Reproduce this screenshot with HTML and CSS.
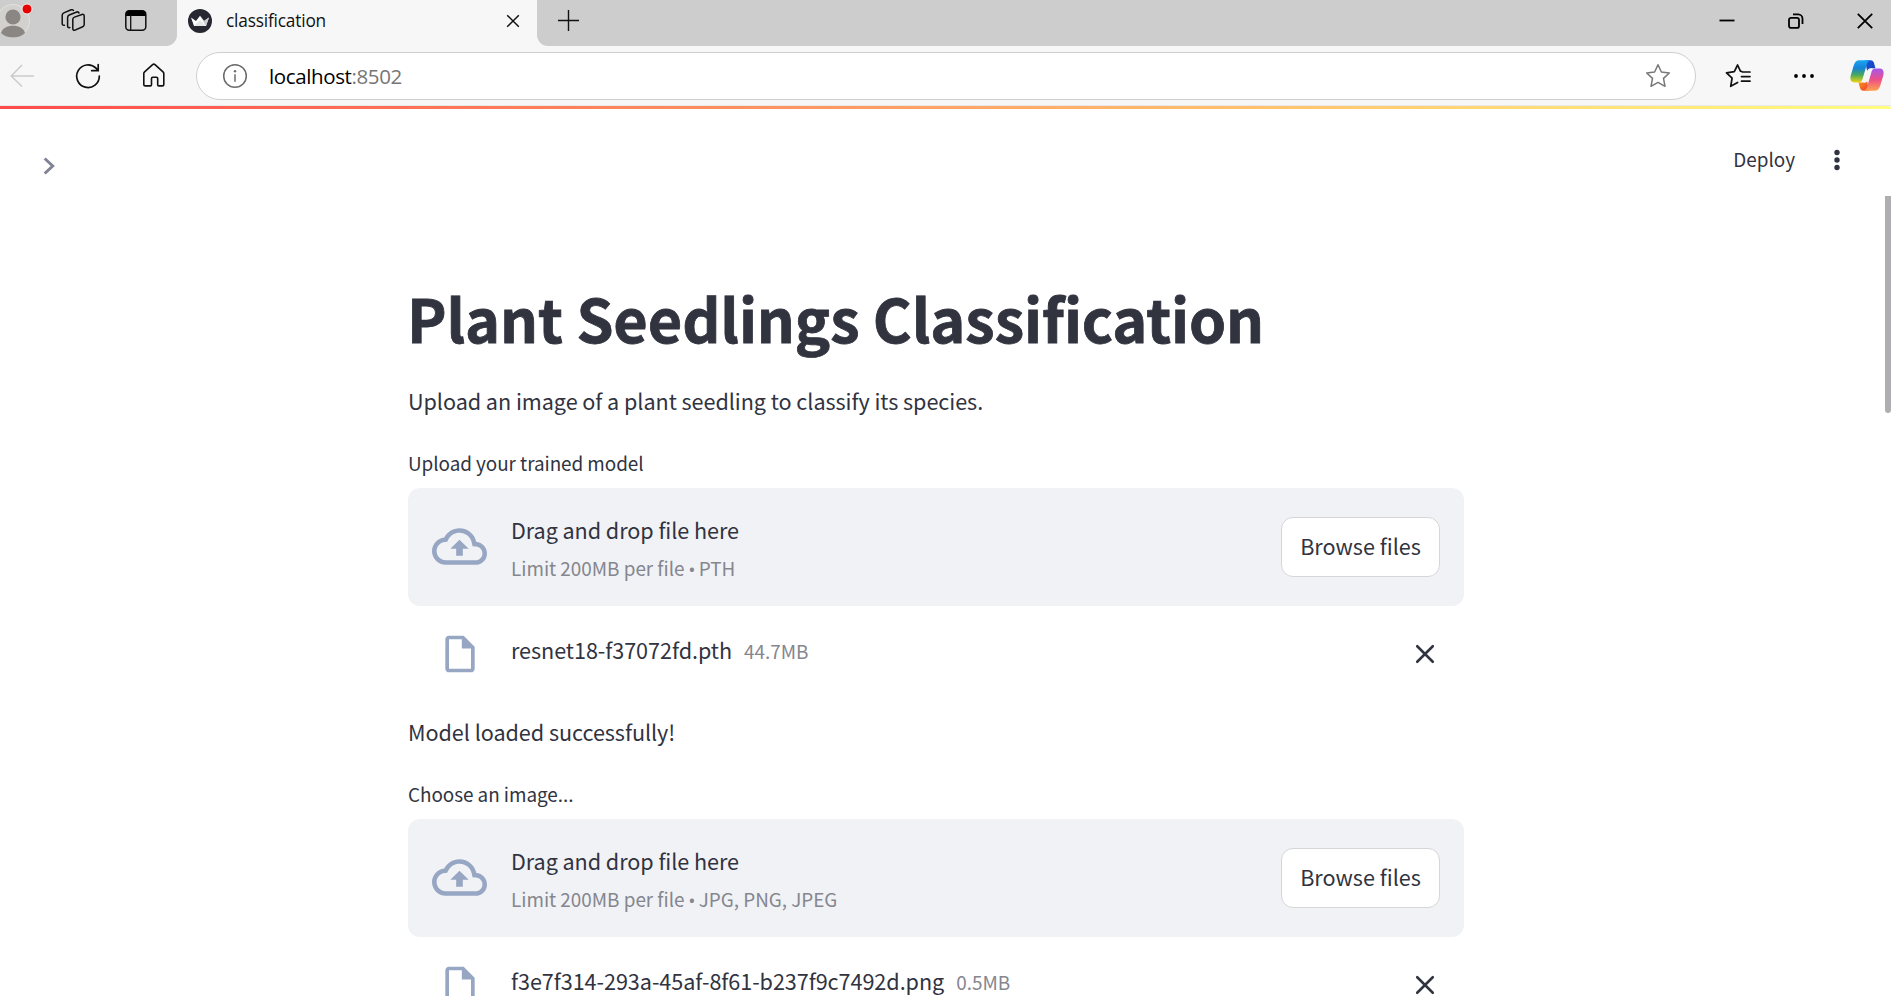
FILE: index.html
```html
<!DOCTYPE html>
<html lang="en">
<head>
<meta charset="utf-8">
<title>classification</title>
<link rel="stylesheet" href="styles.css">
</head>
<body>
<svg class="defs" width="0" height="0">
  <symbol id="cloud" viewBox="0 0 24 24"><path d="M19.35 10.04C18.67 6.59 15.64 4 12 4 9.11 4 6.6 5.64 5.35 8.04 2.34 8.36 0 10.91 0 14c0 3.31 2.69 6 6 6h13c2.76 0 5-2.24 5-5 0-2.64-2.05-4.78-4.65-4.96zM19 18H6c-2.21 0-4-1.79-4-4 0-2.05 1.53-3.76 3.56-3.97l1.07-.11.5-.95C8.08 7.14 9.94 6 12 6c2.62 0 4.88 1.86 5.39 4.43l.3 1.5 1.53.11c1.56.1 2.78 1.41 2.78 2.96 0 1.65-1.35 3-3 3zM8 13h2.55v3h2.9v-3H16l-4-4z"/></symbol>
  <symbol id="file" viewBox="0 0 24 24"><path d="M14 2H6c-1.1 0-1.99.9-1.99 2L4 20c0 1.1.89 2 1.99 2H18c1.1 0 2-.9 2-2V8l-6-6zM6 20V4h7v5h5v11H6z"/></symbol>
  <symbol id="cross" viewBox="0 0 18 18"><path d="M2 2l14 14M16 2L2 16" fill="none" stroke="#31333f" stroke-width="2.300" stroke-linecap="round"/></symbol>
</svg>

<div class="tabbar">
  <div class="tab-tools">
    <svg class="avatar" width="34" height="46" viewBox="0 0 34 46">
      <circle cx="13" cy="21" r="16.500" fill="#d3d1ce" stroke="#e3e2e0"/>
      <circle cx="13" cy="17" r="7.600" fill="#8a8683"/>
      <path d="M1 33c1-4.600 6-7.300 12-7.300s11 2.700 12 7.300c-3 3-7.500 4.500-12 4.500S4 36 1 33z" fill="#8a8683"/>
      <circle cx="27" cy="9" r="5" fill="#e60000" stroke="#f3eeee" stroke-width="1"/>
    </svg>
    <svg class="workspaces" width="26" height="26" viewBox="0 0 26 26" fill="none" stroke="#111" stroke-width="1.500" stroke-linejoin="round" stroke-linecap="round">
      <path d="M12.800 11.200q.2-1.600 1.700-2.100l7.500-2.600q2.200-.6 2.200 1.600v8.400q0 1.600-1.500 2.200l-7.700 3.400q-2.200.8-2.200-1.500z"/>
      <path d="M9.800 19.600q-2.200.5-2.200-1.700V9.400q0-1.700 1.600-2.400l7.600-3q1.700-.5 2.200 1"/>
      <path d="M4.400 17.300q-2.200.3-2.200-1.700V7.300q0-1.700 1.600-2.400l7.400-3.100q1.500-.5 2.200.6"/>
    </svg>
    <svg class="panel" width="22" height="22" viewBox="0 0 22 22">
      <rect x=".8" y=".8" width="20" height="19.500" rx="3.500" fill="none" stroke="#111" stroke-width="1.500"/>
      <path d="M.8 6V4a3.500 3.500 0 0 1 3.500-3.500h13A3.500 3.500 0 0 1 20.800 4v2z" fill="#000"/>
      <path d="M5.700 5v15" stroke="#111" stroke-width="1.300"/>
    </svg>
  </div>
  <div class="tab">
    <svg class="favicon" width="24" height="24" viewBox="0 0 24 24">
      <circle cx="12" cy="12" r="12" fill="#262730"/>
      <path d="M3 8.500l5 3.500 4-5.200 4 5.200 5-3.500-3 8.400H6z" fill="#fff"/>
      <path d="M12 6.800l4 5.200 5-3.500-3 8.400z" fill="#c9c9cc"/>
      <path d="M6 16.900L12 11l6 5.900z" fill="#e6e6e8"/>
    </svg>
    <span class="tab-title">classification</span>
    <svg class="tab-close" width="14" height="14" viewBox="0 0 14 14"><path d="M1.200 1.200l11.600 11.600M12.800 1.200L1.200 12.800" stroke="#111" stroke-width="1.500"/></svg>
  </div>
  <div class="tab-rest">
    <svg class="plus" width="21" height="21" viewBox="0 0 21 21"><path d="M10.500 0v21M0 10.500h21" stroke="#111" stroke-width="1.400"/></svg>
    <div class="window-buttons">
      <svg width="16" height="16" viewBox="0 0 16 16"><path d="M.5 7.500h15" stroke="#000" stroke-width="1.800"/></svg>
      <svg width="16" height="16" viewBox="0 0 16 16" fill="none" stroke="#000" stroke-width="1.800"><rect x="1" y="4.900" width="10" height="10" rx="2"/><path d="M5 1.400h5.200a4.300 4.300 0 0 1 4.300 4.300V11"/></svg>
      <svg width="16" height="16" viewBox="0 0 16 16"><path d="M.8.8l14.400 14.400M15.200.8L.8 15.200" stroke="#000" stroke-width="1.800"/></svg>
    </div>
  </div>
</div>

<div class="toolbar">
  <svg class="back" width="25" height="24" viewBox="0 0 25 24" fill="none" stroke="#cbcbcb" stroke-width="1.500"><path d="M24 12H1.500M12 1L1.200 12 12 22.500"/></svg>
  <svg class="reload" width="26" height="26" viewBox="0 0 26 26" fill="none" stroke="#111" stroke-width="1.700" stroke-linecap="round"><path d="M24.300 13A11.300 11.300 0 1 1 21 5.200l2 2.300M23.200 1.500v6.200h-6.500"/></svg>
  <svg class="home" width="24" height="25" viewBox="0 0 24 25" fill="none" stroke="#111" stroke-width="1.600" stroke-linejoin="round"><path d="M1.800 10.500q0-1 .8-1.700l8-7.200q1.200-1 2.400 0l8 7.200q.8.700.8 1.700v10.700q0 1.700-1.700 1.700h-3.300q-1.100 0-1.100-1.100v-6.300q0-1.200-1.200-1.200h-3.800q-1.200 0-1.200 1.200v6.300q0 1.100-1.100 1.100H3.500q-1.700 0-1.700-1.700z"/></svg>
  <div class="address">
    <svg class="info" width="26" height="26" viewBox="0 0 26 26"><circle cx="13" cy="13" r="11.300" fill="none" stroke="#6b6b6b" stroke-width="1.500"/><path d="M13 11.300v7.500" stroke="#6b6b6b" stroke-width="1.500"/><circle cx="13" cy="8.200" r="1.200" fill="#6b6b6b"/></svg>
    <span class="url">localhost<span class="port">:8502</span></span>
    <svg class="star" width="26" height="26" viewBox="0 0 26 26" fill="none" stroke="#777" stroke-width="1.500" stroke-linejoin="round"><path d="M13 1.800l3.400 7.200 7.900 1-5.800 5.400 1.500 7.900-7-3.900-7 3.900 1.500-7.900L1.700 10l7.900-1z"/></svg>
  </div>
  <svg class="favorites" width="26" height="26" viewBox="0 0 26 26" fill="none" stroke="#111" stroke-width="1.700" stroke-linejoin="round" stroke-linecap="round"><path d="M16.800 8.500l-1.400-.3L12.600 2 9.300 8.600 1.500 9.800l5.600 5.400-1.400 8.100 6.900-3.800"/><path d="M17.500 9H25M16.500 13.600H25M16.500 18.200H25"/></svg>
  <svg class="more" width="22" height="6" viewBox="0 0 22 6" fill="#000"><circle cx="3" cy="3" r="1.900"/><circle cx="11" cy="3" r="1.900"/><circle cx="19" cy="3" r="1.900"/></svg>
  <svg class="copilot" width="34" height="31" viewBox="0 0 34 31">
    <defs>
      <linearGradient id="cpA" x1="0" y1="0" x2="0" y2="1"><stop offset="0" stop-color="#1aa6f0"/><stop offset=".35" stop-color="#1683d8"/><stop offset=".65" stop-color="#45a85e"/><stop offset="1" stop-color="#f2d312"/></linearGradient>
      <linearGradient id="cpB" x1="0" y1="0" x2="0" y2="1"><stop offset="0" stop-color="#a457ef"/><stop offset=".5" stop-color="#ee4f87"/><stop offset="1" stop-color="#ffa24e"/></linearGradient>
      <linearGradient id="cpC" x1="0" y1="0" x2="1" y2="1"><stop offset="0" stop-color="#1857e0"/><stop offset="1" stop-color="#1540b8"/></linearGradient>
      <linearGradient id="cpD" x1="0" y1="0" x2="1" y2="1"><stop offset="0" stop-color="#f9a11d"/><stop offset="1" stop-color="#ec3a2e"/></linearGradient>
    </defs>
    <path d="M15 .3h5.500c2 0 3 1.200 3.600 3l1.300 5H21c-2.200 0-3.200.8-3.900 2.800z" fill="url(#cpC)"/>
    <path d="M19 30.700h-5.500c-2 0-3-1.200-3.600-3l-1.400-5.200H13c2.200 0 3.200-.8 3.900-2.800z" fill="url(#cpD)"/>
    <path d="M9.500.3H20c-1.800.5-2.600 2.200-3.200 4.200l-4.400 15c-.6 1.900-1.700 3-3.700 3H4.300C.6 22.500-.3 19 .8 15.300l3-10C4.700 2.200 6.500.3 9.500.3z" fill="url(#cpA)"/>
    <path d="M24.500 30.700H14c1.800-.5 2.600-2.200 3.200-4.200l4.400-15c.6-1.900 1.700-3 3.700-3h4.400c3.700 0 4.600 3.500 3.500 7.200l-3 10c-.9 3.100-2.700 5-5.700 5z" fill="url(#cpB)"/>
    <path d="M17.800 10.500q.8-2 3-2h1.500q-1 .8-1.500 2.500l-2.800 9.500q-.8 2-3 2h-1.500q1-.8 1.500-2.500z" fill="#f9f5f4"/>
  </svg>
</div>

<div class="app">
  <div class="decoration"></div>
  <div class="scroll-thumb"></div>
  <header class="app-header">
    <svg class="chevron" width="14" height="20" viewBox="0 0 14 20"><path d="M2.700 2.500l8 7.500-8 7.500" fill="none" stroke="#808495" stroke-width="3"/></svg>
    <span class="deploy">Deploy</span>
    <svg class="kebab" width="6" height="22" viewBox="0 0 6 22" fill="#31333f"><circle cx="3" cy="3.500" r="2.700"/><circle cx="3" cy="11" r="2.700"/><circle cx="3" cy="18.500" r="2.700"/></svg>
  </header>

  <main class="block">
    <h1>Plant Seedlings Classification</h1>
    <p class="para">Upload an image of a plant seedling to classify its species.</p>

    <section class="uploader">
      <div class="label">Upload your trained model</div>
      <div class="dropzone">
        <svg class="cloud"><use href="#cloud"/></svg>
        <div class="instructions">
          <span class="drag">Drag and drop file here</span>
          <span class="limit">Limit 200MB per file<span class="dot"> • </span>PTH</span>
        </div>
        <button class="browse">Browse files</button>
      </div>
      <div class="file-row">
        <svg class="file"><use href="#file"/></svg>
        <span class="file-name">resnet18-f37072fd.pth</span>
        <span class="file-size">44.7MB</span>
        <svg class="cross"><use href="#cross"/></svg>
      </div>
    </section>

    <p class="para">Model loaded successfully!</p>

    <section class="uploader">
      <div class="label">Choose an image...</div>
      <div class="dropzone">
        <svg class="cloud"><use href="#cloud"/></svg>
        <div class="instructions">
          <span class="drag">Drag and drop file here</span>
          <span class="limit">Limit 200MB per file<span class="dot"> • </span>JPG, PNG, JPEG</span>
        </div>
        <button class="browse">Browse files</button>
      </div>
      <div class="file-row">
        <svg class="file"><use href="#file"/></svg>
        <span class="file-name">f3e7f314-293a-45af-8f61-b237f9c7492d.png</span>
        <span class="file-size">0.5MB</span>
        <svg class="cross"><use href="#cross"/></svg>
      </div>
    </section>
  </main>
</div>
</body>
</html>
```
FILE: styles.css
```css
* { box-sizing: border-box; }
html, body { margin: 0; height: 996px; overflow: hidden; }
body {
  display: flex;
  flex-direction: column;
  background: #fff;
  color: #31333f;
  font-family: "Noto Sans CJK SC", "Source Sans Pro", sans-serif;
}
svg { display: block; flex: none; }
.defs { position: absolute; }

/* Browser tab strip */
.tabbar { display: flex; flex: none; height: 46px; background: #f7f7f7; }
.tab-tools {
  display: flex;
  align-items: center;
  width: 177px;
  background: #cdcdcd;
  border-bottom-right-radius: 11px;
}
.workspaces { margin: -5px 0 0 26px; }
.panel { margin: -4px 0 0 39px; }
.tab { display: flex; align-items: center; width: 360px; padding-left: 11px; }
.favicon { margin-top: -4px; }
.tab-title {
  margin: -5px auto 0 14px;
  font: 17.300px/26px "Open Sans", sans-serif;
  letter-spacing: -0.19px;
  color: #111;
}
.tab-close { margin: -4px 17px 0 0; }
.tab-rest {
  display: flex;
  flex: 1;
  align-items: center;
  justify-content: space-between;
  padding: 0 18px 0 21px;
  background: #cdcdcd;
  border-bottom-left-radius: 11px;
}
.plus { margin-top: -6px; }
.window-buttons { display: flex; gap: 53px; margin-top: -5px; }

/* Browser toolbar */
.toolbar {
  display: flex;
  flex: none;
  align-items: center;
  height: 60px;
  background: #f7f7f7;
  border-bottom: 1px solid #e9e9e9;
}
.back { margin-left: 10px; }
.reload { margin-left: 40px; }
.home { margin-left: 41px; }
.address {
  display: flex;
  align-items: center;
  width: 1500px;
  height: 48px;
  margin-left: 30px;
  padding: 0 24px 0 25px;
  background: #fff;
  border: 1px solid #cfcfcf;
  border-radius: 24px;
}
.url {
  margin: 0 auto 0 21px;
  font: 20.500px/30px "Open Sans", sans-serif;
  letter-spacing: -0.38px;
  color: #000;
}
.port { color: #767676; }
.favorites { margin-left: 29px; }
.more { margin-left: 42px; }
.copilot { margin-left: 35px; }

/* Streamlit page */
.app { position: relative; flex: 1; background: #fff; }
.decoration { height: 3px; background: linear-gradient(90deg, #ff4b4b, #fffd80); border-top-right-radius: 6px; }
.scroll-thumb {
  position: absolute;
  top: 90px;
  right: 0;
  width: 6px;
  height: 217px;
  background: #aeaeb3;
  border-radius: 0 0 3px 3px;
}
.app-header { display: flex; align-items: center; height: 102px; padding: 0 51px 0 42px; }
.chevron { margin: 12px auto 0 0; }
.deploy { margin-top: -2px; font-size: 18.900px; line-height: 32px; }
.kebab { margin-left: 39px; }

.block { width: 1056px; margin: 67px 0 0 408px; }
h1 {
  margin: 0 0 25px -1px;
  font-size: 59.400px;
  line-height: 79px;
  font-weight: 700;
  letter-spacing: -0.1px;
  -webkit-text-stroke: 0.8px #31333f;
}
.para { margin: 0 0 27px; font-size: 21.600px; line-height: 38px; letter-spacing: -0.05px; }
.label { font-size: 18.900px; line-height: 32px; margin-bottom: 9px; letter-spacing: -0.05px; }
.dropzone {
  display: flex;
  align-items: center;
  height: 118px;
  padding: 0 24px;
  background: #f0f2f6;
  border-radius: 12px;
}
.cloud { width: 55px; height: 55px; margin-top: -1px; fill: #97a6c3; }
.instructions { display: flex; flex-direction: column; margin: 3px auto 0 24px; }
.drag { font-size: 21.600px; line-height: 38px; letter-spacing: -0.06px; }
.limit { font-size: 18.900px; line-height: 37px; color: #85868e; letter-spacing: -0.02px; }
.dot { font-family: "Noto Sans", sans-serif; font-size: 18px; letter-spacing: -0.6px; line-height: 1; }
.browse {
  width: 159px;
  height: 60px;
  padding: 0 0 2px;
  border: 1px solid #d6d6d9;
  border-radius: 12px;
  background: #fff;
  color: #31333f;
  font: 21.600px/38px "Noto Sans CJK SC", sans-serif;
}
.file-row { display: flex; align-items: center; height: 46px; margin: 25px 0 36px; padding: 0 29px; }
.file { width: 44px; height: 44px; margin-left: 0.5px; fill: #97a6c3; }
.file-name { margin: -9px 12px 0 29.500px; font-size: 21.600px; line-height: 38px; letter-spacing: -0.05px; }
.file-size { margin: -7px auto 0 0; font-size: 18.900px; line-height: 32px; color: #85868e; }
.cross { width: 20px; height: 20px; }
```
